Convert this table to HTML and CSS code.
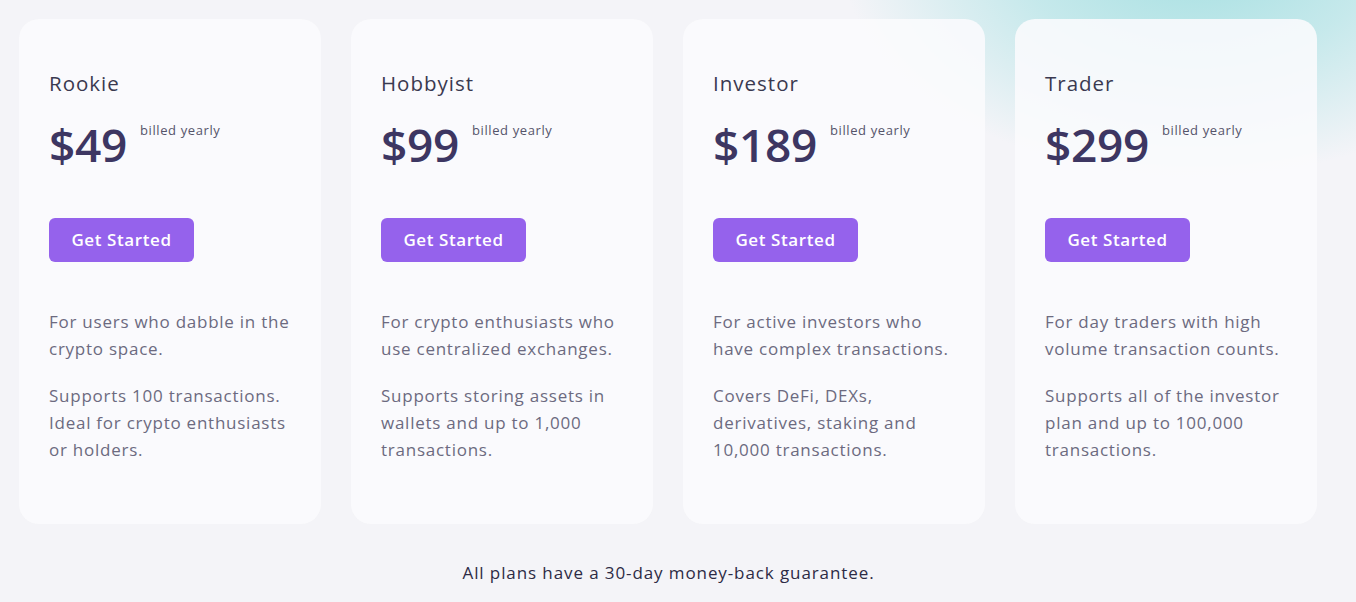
FILE: index.html
```html
<!DOCTYPE html>
<html lang="en">
<head>
  <meta charset="UTF-8" />
  <meta name="viewport" content="width=device-width, initial-scale=1.0"/>
  <title>Pricing</title>
  <link rel="stylesheet" href="styles.css">
</head>
<body>

<div class="page">
  <div class="glow"></div>

  <div class="plans">
    <div class="plan">
      <h2>Rookie</h2>
      <div class="price"><span class="amount">$49</span><span class="billed">billed yearly</span></div>
      <a class="btn" href="#">Get Started</a>
      <p>For users who dabble in the crypto space.</p>
      <p>Supports 100 transactions. Ideal for crypto enthusiasts or holders.</p>
    </div>
    <div class="plan">
      <h2>Hobbyist</h2>
      <div class="price"><span class="amount">$99</span><span class="billed">billed yearly</span></div>
      <a class="btn" href="#">Get Started</a>
      <p>For crypto enthusiasts who use centralized exchanges.</p>
      <p>Supports storing assets in wallets and up to 1,000 transactions.</p>
    </div>
    <div class="plan">
      <h2>Investor</h2>
      <div class="price"><span class="amount">$189</span><span class="billed">billed yearly</span></div>
      <a class="btn" href="#">Get Started</a>
      <p>For active investors who have complex transactions.</p>
      <p>Covers DeFi, DEXs, derivatives, staking and 10,000 transactions.</p>
    </div>
    <div class="plan">
      <h2>Trader</h2>
      <div class="price"><span class="amount">$299</span><span class="billed">billed yearly</span></div>
      <a class="btn" href="#">Get Started</a>
      <p>For day traders with high volume transaction counts.</p>
      <p>Supports all of the investor plan and up to 100,000 transactions.</p>
    </div>
  </div>

  <p class="guarantee">All plans have a 30-day money-back guarantee.</p>
</div>

</body>
</html>
```

FILE: styles.css
```css
body {
  font-family: 'Open Sans', sans-serif;
  background-color: #f4f4f8;
  margin: 0;
  color: #3b3a55;
}
.page {
  position: relative;
  overflow: hidden;
  height: 602px;
  padding: 19px 0 0 19px;
  box-sizing: border-box;
}
.glow {
  position: absolute;
  top: -280px;
  right: -200px;
  width: 720px;
  height: 460px;
  background: radial-gradient(ellipse at center, rgba(160, 222, 224, 0.95) 0%, rgba(178, 228, 230, 0.7) 35%, rgba(244, 244, 248, 0) 70%);
}
.plans {
  position: relative;
  display: grid;
  grid-template-columns: repeat(4, 302px);
  column-gap: 30px;
  width: 1298px;
}
.plan {
  background-color: rgba(251, 251, 253, 0.88);
  border-radius: 20px;
  height: 505px;
  padding: 52px 30px 0 30px;
  box-sizing: border-box;
}
h2 {
  font-size: 20.5px;
  font-weight: 400;
  margin: 0;
  line-height: 24px;
  color: #3a3950;
  letter-spacing: 1px;
}
.price {
  display: flex;
  align-items: flex-start;
  margin-top: 20px;
  height: 64px;
}
.amount {
  font-size: 46px;
  font-weight: 600;
  color: #3d3662;
  line-height: 58px;
  letter-spacing: -0.3px;
}
.billed {
  font-size: 13px;
  color: #55546a;
  margin-left: 13px;
  margin-top: 6px;
  letter-spacing: 0.6px;
}
.btn {
  display: inline-block;
  margin-top: 39px;
  background-color: #9562ec;
  color: #ffffff;
  text-decoration: none;
  font-size: 17px;
  font-weight: 600;
  line-height: 44px;
  height: 44px;
  width: 145px;
  text-align: center;
  border-radius: 6px;
  letter-spacing: 0.6px;
}
p {
  font-size: 17px;
  line-height: 27px;
  color: #6c6a80;
  margin: 0;
  letter-spacing: 0.75px;
}
.btn + p {
  margin-top: 46px;
}
p + p {
  margin-top: 20px;
}
.guarantee {
  position: relative;
  text-align: center;
  color: #2d2b45;
  font-size: 17px;
  margin-top: 35px;
  margin-right: 38px;
  letter-spacing: 0.9px;
}
```
